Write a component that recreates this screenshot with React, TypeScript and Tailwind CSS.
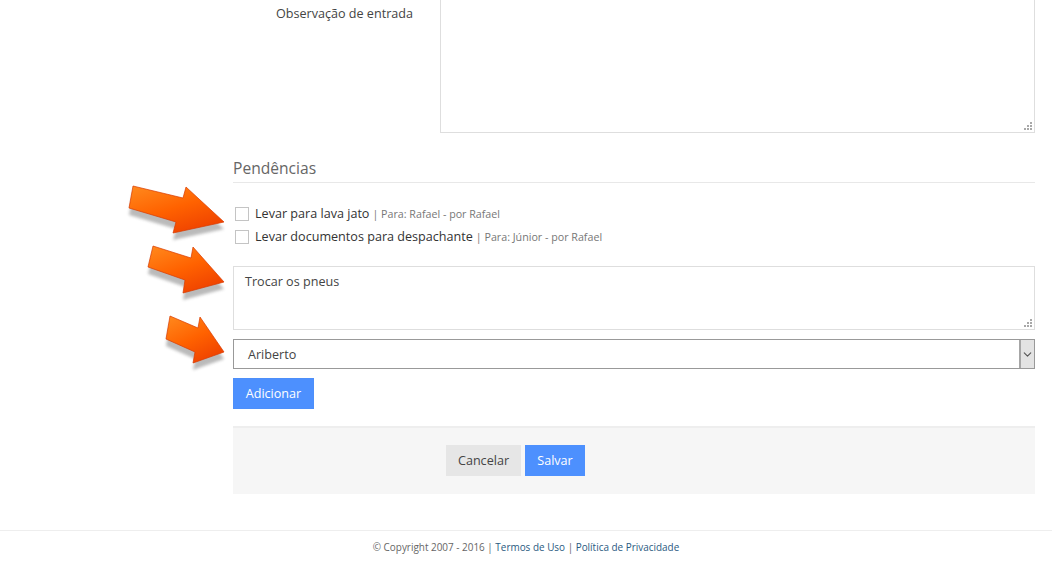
import { ChevronDown } from "lucide-react";

const Grip = () => (
  <svg width="8" height="8" viewBox="0 0 8 8" className="absolute right-[2px] bottom-[2px]">
    <g fill="#a8a8a8">
      <rect x="6" y="0" width="2" height="2" />
      <rect x="3" y="3" width="2" height="2" />
      <rect x="6" y="3" width="2" height="2" />
      <rect x="0" y="6" width="2" height="2" />
      <rect x="3" y="6" width="2" height="2" />
      <rect x="6" y="6" width="2" height="2" />
    </g>
  </svg>
);

const Arrows = () => (
  <svg width="110" height="200" viewBox="125 180 110 200" className="absolute left-[125px] top-[180px]">
    <defs>
      <linearGradient id="arrowFill" x1="0" y1="0" x2="0.6" y2="1">
        <stop offset="0" stopColor="#ff8a1e" />
        <stop offset="0.55" stopColor="#ff6200" />
        <stop offset="1" stopColor="#f04400" />
      </linearGradient>
      <filter id="arrowShadow" x="-20%" y="-20%" width="150%" height="160%">
        <feGaussianBlur stdDeviation="1.6" />
      </filter>
    </defs>
    <g fill="#555" opacity="0.4" filter="url(#arrowShadow)">
      <polygon points="133,192 183,204 186,193 224,228 173,239 176,228 129,214" transform="translate(0,1)" />
      <polygon points="153,252 191,264 193,253 224,288 183,299 185,286 148,273" transform="translate(0,1)" />
      <polygon points="170,322 198,334 200,323 224,358 193,369 195,358 166,345" transform="translate(0,1)" />
    </g>
    <g fill="url(#arrowFill)" stroke="#d83a00" strokeWidth="0.7" strokeLinejoin="round">
      <polygon points="133,186 183,198 186,187 224,222 173,233 176,222 129,208" />
      <polygon points="153,246 191,258 193,247 224,282 183,293 185,280 148,267" />
      <polygon points="170,316 198,328 200,317 224,352 193,363 195,352 166,339" />
    </g>
  </svg>
);

const Pendencia = ({ title, meta, className }: { title: string; meta: string; className: string }) => (
  <label className={`flex items-center h-[22px] ${className}`}>
    <span className="w-[12px] h-[12px] ml-[2px] mr-[6px] border border-[#c4c4c4] bg-white box-content shrink-0" />
    <span className="text-[12.6px] text-[#333]">{title}</span>
    <span className="text-[10.7px] text-[#777] ml-[3px]">| {meta}</span>
  </label>
);

export default function App() {
  return (
    <div className="relative h-[563px] w-[1052px] overflow-hidden bg-white font-['Open_Sans',sans-serif] text-[12.6px]">
      <div className="ml-[233px] w-[802px]">
        <div className="flex h-[133px]">
          <div className="w-[180px] pt-[5px] text-right text-[#444] leading-[18px]">Observação de entrada</div>
          <div className="relative ml-[27px] flex-1 border-x border-b border-[#dedede]">
            <Grip />
          </div>
        </div>

        <div className="mt-[25px] h-[25px] border-b border-[#e8e8e8] text-[15.6px] leading-[21px] text-[#666]">Pendências</div>

        <div className="mt-[20px]">
          <Pendencia className="" title="Levar para lava jato" meta="Para: Rafael - por Rafael" />
          <Pendencia className="pt-[2px]" title="Levar documentos para despachante" meta="Para: Júnior - por Rafael" />
        </div>

        <div className="relative mt-[19px] h-[64px] border border-[#dedede] px-[11px] py-[6px] leading-[18px] text-[#444]">
          Trocar os pneus
          <Grip />
        </div>

        <div className="mt-[9px] flex h-[30px] items-center justify-between border border-[#999999] pl-[14px] text-[#444]">
          <span className="pt-[2px]">Ariberto</span>
          <span className="flex h-full w-[15px] items-center justify-center border-l-2 border-[#a6a6a6] bg-[#e3e3e3]">
            <ChevronDown size={13} strokeWidth={2} className="text-[#555]" />
          </span>
        </div>

        <button className="mt-[9px] block h-[31px] w-[81px] bg-[#4d90fe] border border-[#4d8ffa] pt-[1px] text-white">Adicionar</button>

        <div className="mt-[17px] flex h-[68px] items-start border-t-2 border-[#eeeeee] bg-[#f6f6f6] pl-[213px] pt-[17px]">
          <button className="h-[31px] w-[75px] bg-[#e6e6e6] pt-[1px] text-[#444]">Cancelar</button>
          <button className="ml-[4px] h-[31px] w-[60px] bg-[#4d90fe] pt-[1px] text-white">Salvar</button>
        </div>
      </div>

      <div className="mt-[36px] border-t border-[#eeeeee] pt-[9px] text-center text-[9.93px] leading-[14px] text-[#666]">
        © Copyright 2007 - 2016 | <a className="text-[#2a5a7f]">Termos de Uso</a> | <a className="text-[#2a5a7f]">Política de Privacidade</a>
      </div>

      <Arrows />
    </div>
  );
}
